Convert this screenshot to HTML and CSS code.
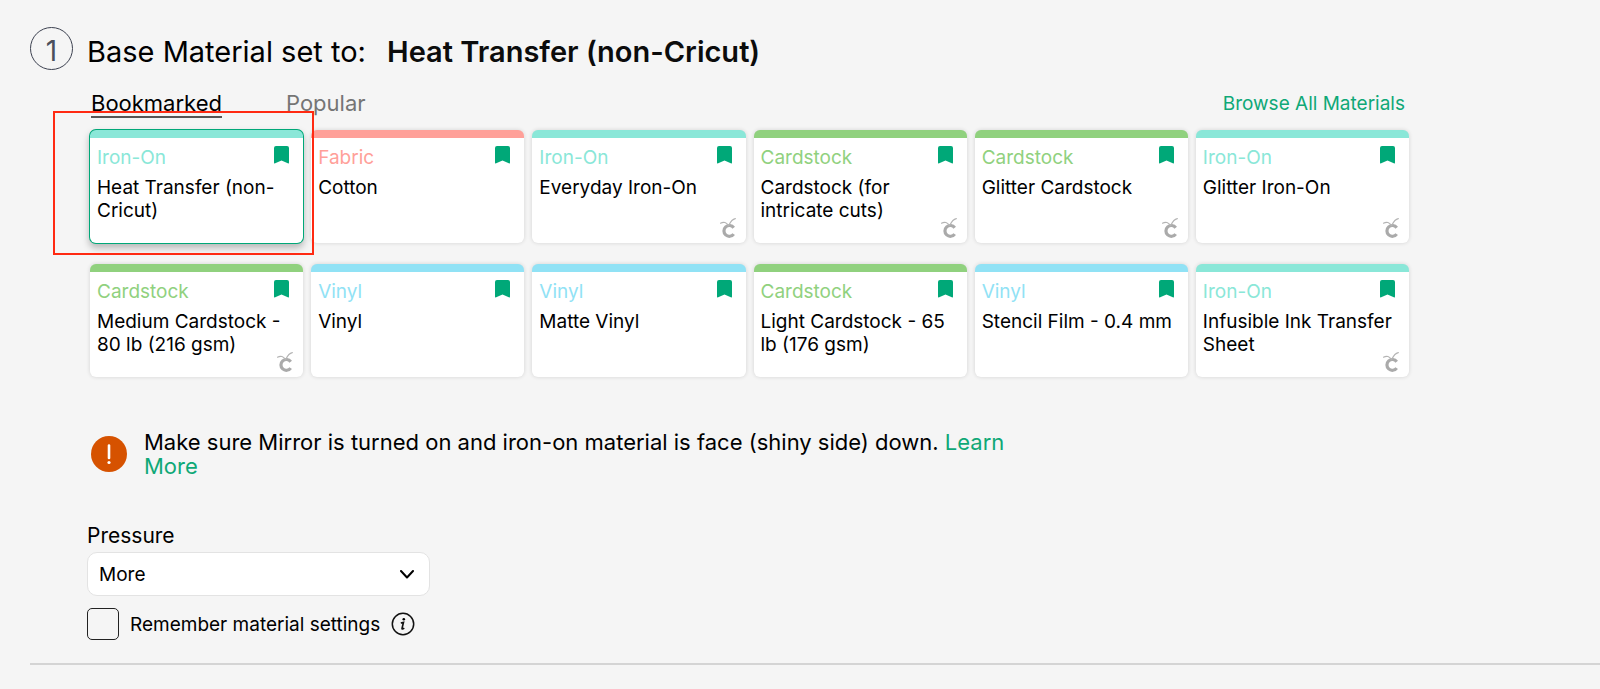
FILE: index.html
```html
<!DOCTYPE html>
<html lang="en">
<head>
<meta charset="utf-8">
<meta name="viewport" content="width=device-width, initial-scale=1">
<title>Base Material</title>
<link rel="stylesheet" href="styles.css">
</head>
<body>
<svg class="sprite" aria-hidden="true">
  <symbol id="bookmark" viewBox="0 0 15 18"><path d="M2 0h11a2 2 0 0 1 2 2v14.500q0 1.300-1.200.7L7.500 14.500 1.200 17.200Q0 17.800 0 16.500V2a2 2 0 0 1 2-2z"/></symbol>
  <symbol id="brand" viewBox="0 0 16 20"><path class="thick" d="M13.700 9.700a5.400 5.400 0 1 0 0 6.400"/><path class="thin" d="M.5 5.200c3-1.600 6.300-.9 7.700 2.200M8.700 7.600C10 5 11 1.600 15.300.6"/></symbol>
</svg>
<main class="page">
  <section class="step">
    <header class="step-head">
      <span class="step-number">1</span>
      <h1 class="title">Base Material set to: <strong class="title-value">Heat Transfer (non-Cricut)</strong></h1>
    </header>
    <div class="materials">
      <nav class="tabs">
        <button class="tab tab-active" type="button">Bookmarked</button>
        <button class="tab" type="button">Popular</button>
        <a class="link browse" href="#">Browse All Materials</a>
      </nav>
      <div class="grid">
        <article class="card iron selected"><div class="card-top"><span class="kind">Iron-On</span><svg class="mark"><use href="#bookmark"/></svg></div><p class="name">Heat Transfer (non-Cricut)</p></article>
        <article class="card fabric"><div class="card-top"><span class="kind">Fabric</span><svg class="mark"><use href="#bookmark"/></svg></div><p class="name">Cotton</p></article>
        <article class="card iron"><div class="card-top"><span class="kind">Iron-On</span><svg class="mark"><use href="#bookmark"/></svg></div><p class="name">Everyday Iron-On</p><svg class="brand"><use href="#brand"/></svg></article>
        <article class="card stock"><div class="card-top"><span class="kind">Cardstock</span><svg class="mark"><use href="#bookmark"/></svg></div><p class="name">Cardstock (for intricate cuts)</p><svg class="brand"><use href="#brand"/></svg></article>
        <article class="card stock"><div class="card-top"><span class="kind">Cardstock</span><svg class="mark"><use href="#bookmark"/></svg></div><p class="name">Glitter Cardstock</p><svg class="brand"><use href="#brand"/></svg></article>
        <article class="card iron"><div class="card-top"><span class="kind">Iron-On</span><svg class="mark"><use href="#bookmark"/></svg></div><p class="name">Glitter Iron-On</p><svg class="brand"><use href="#brand"/></svg></article>
        <article class="card stock"><div class="card-top"><span class="kind">Cardstock</span><svg class="mark"><use href="#bookmark"/></svg></div><p class="name">Medium Cardstock - 80 lb (216 gsm)</p><svg class="brand"><use href="#brand"/></svg></article>
        <article class="card vinyl"><div class="card-top"><span class="kind">Vinyl</span><svg class="mark"><use href="#bookmark"/></svg></div><p class="name">Vinyl</p></article>
        <article class="card vinyl"><div class="card-top"><span class="kind">Vinyl</span><svg class="mark"><use href="#bookmark"/></svg></div><p class="name">Matte Vinyl</p></article>
        <article class="card stock"><div class="card-top"><span class="kind">Cardstock</span><svg class="mark"><use href="#bookmark"/></svg></div><p class="name">Light Cardstock - 65 lb (176 gsm)</p></article>
        <article class="card vinyl"><div class="card-top"><span class="kind">Vinyl</span><svg class="mark"><use href="#bookmark"/></svg></div><p class="name">Stencil Film - 0.4 mm</p></article>
        <article class="card iron"><div class="card-top"><span class="kind">Iron-On</span><svg class="mark"><use href="#bookmark"/></svg></div><p class="name">Infusible Ink Transfer Sheet</p><svg class="brand"><use href="#brand"/></svg></article>
      </div>
      <div class="highlight"></div>
    </div>
    <div class="alert">
      <svg class="alert-icon" viewBox="0 0 36 36"><circle cx="18" cy="18" r="18" fill="#d65200"/><path d="M18 9.500v12.500" stroke="#fff" stroke-width="2.600" stroke-linecap="round"/><circle cx="18" cy="26.500" r="1.600" fill="#fff"/></svg>
      <p class="alert-text">Make sure Mirror is turned on and iron-on material is face (shiny side) down. <a class="link" href="#">Learn More</a></p>
    </div>
    <form class="settings">
      <label class="field-label" for="pressure">Pressure</label>
      <div class="select-wrap">
        <select class="select" id="pressure"><option>More</option></select>
        <svg class="chevron" viewBox="0 0 14 9"><path d="M1 1l6 6.500L13 1" fill="none" stroke="#000" stroke-width="2" stroke-linecap="round" stroke-linejoin="round"/></svg>
      </div>
      <div class="remember">
        <input class="check" type="checkbox" id="remember">
        <label for="remember">Remember material settings</label>
        <svg class="info" viewBox="0 0 24 24"><circle cx="12" cy="12" r="10.700" fill="none" stroke="#111" stroke-width="1.500"/><circle cx="12.800" cy="7.300" r="1.300"/><path d="M9.800 11l2.700-.7-1.500 6.200q-.2 1.200 2.300-.4" fill="none" stroke="#111" stroke-width="1.600"/></svg>
      </div>
    </form>
  </section>
</main>
</body>
</html>
```
FILE: styles.css
```css
* { box-sizing: border-box; }
body {
  margin: 0;
  background: #f5f5f5;
  color: #000;
  font-family: Inter, "Liberation Sans", sans-serif;
  font-size: 19px;
  line-height: 23px;
}
.sprite { position: absolute; width: 0; height: 0; }
.page { padding: 27px 0 24px 30px; }
.step { padding-bottom: 23px; border-bottom: 2px solid #d4d4d4; }
.step-head { display: flex; align-items: center; gap: 14px; }
.step-number {
  display: flex;
  flex: none;
  align-items: center;
  justify-content: center;
  width: 43px;
  height: 43px;
  padding-top: 5px;
  border: 1px solid #3c4150;
  border-radius: 50%;
  color: #4a4f5c;
  font-size: 28px;
}
.title { margin: 7px 0 0; font-size: 29px; font-weight: 400; line-height: 36px; }
.title-value { margin-left: 13px; color: #0c0c0c; font-weight: 600; }
.materials { position: relative; max-width: 1379px; margin-top: 20px; padding-left: 60px; }
.tabs { display: flex; align-items: flex-start; gap: 64px; padding: 0 4px 0 1px; }
.tab {
  padding: 1px 0 0;
  border: 0;
  border-bottom: 2px solid transparent;
  background: none;
  color: #757575;
  font: inherit;
  font-size: 22px;
  line-height: 25px;
}
.tab-active { border-color: #555; color: #000; }
.link { color: #0fa877; text-decoration: none; }
.browse { margin-left: auto; line-height: 28px; }
.grid {
  display: grid;
  grid-template-columns: repeat(6, minmax(0, 1fr));
  gap: 21px 8px;
  margin-top: 12px;
}
.card {
  position: relative;
  min-height: 113px;
  padding: 7px 14px 11px 7px;
  border-top: 8px solid var(--kind);
  border-radius: 6px;
  background: #fff;
  box-shadow: 0 0 4px rgba(0, 0, 0, .14);
}
.iron { --kind: #8ae7d8; }
.fabric { --kind: #ffa099; }
.stock { --kind: #90d17e; }
.vinyl { --kind: #91e2f5; }
.selected { box-shadow: 0 0 0 1px #00a878, 0 4px 7px 1px rgba(0, 0, 0, .25); }
.card-top { display: flex; justify-content: space-between; }
.kind { padding-top: 1px; color: var(--kind); }
.mark { width: 15px; height: 18px; margin-top: 1px; fill: #00a878; }
.name { margin: 7px 0 0; }
.brand { position: absolute; right: 10px; bottom: 5px; width: 16px; height: 20px; }
.thick { fill: none; stroke: #aaa; stroke-width: 3.2; }
.thin { fill: none; stroke: #b4b4b4; stroke-width: 1.2; stroke-linecap: round; }
.highlight {
  position: absolute;
  top: 21px;
  left: 23px;
  width: 261px;
  height: 144px;
  border: 2px solid #ff2a12;
  pointer-events: none;
}
.alert { display: flex; gap: 17px; max-width: 992px; margin-top: 53px; padding-left: 61px; }
.alert-icon { flex: none; width: 36px; height: 36px; margin-top: 6px; }
.alert-text { margin: 0; font-size: 22px; line-height: 24px; }
.settings { padding: 44px 0 0 57px; }
.field-label { display: block; font-size: 21px; line-height: 28px; }
.select-wrap { position: relative; width: 343px; margin-top: 2px; }
.select {
  display: block;
  width: 100%;
  height: 44px;
  padding: 0 11px;
  appearance: none;
  border: 1px solid #e3e3e3;
  border-radius: 10px;
  background: #fff;
  color: #000;
  font: inherit;
}
.chevron { position: absolute; top: 18px; right: 16px; width: 14px; height: 9px; pointer-events: none; }
.remember { display: flex; align-items: center; gap: 11px; margin-top: 12px; }
.check {
  width: 32px;
  height: 32px;
  margin: 0;
  appearance: none;
  border: 1px solid #222;
  border-radius: 5px;
}
.check:checked { background: #00a878; }
.info { width: 24px; height: 24px; }
```
